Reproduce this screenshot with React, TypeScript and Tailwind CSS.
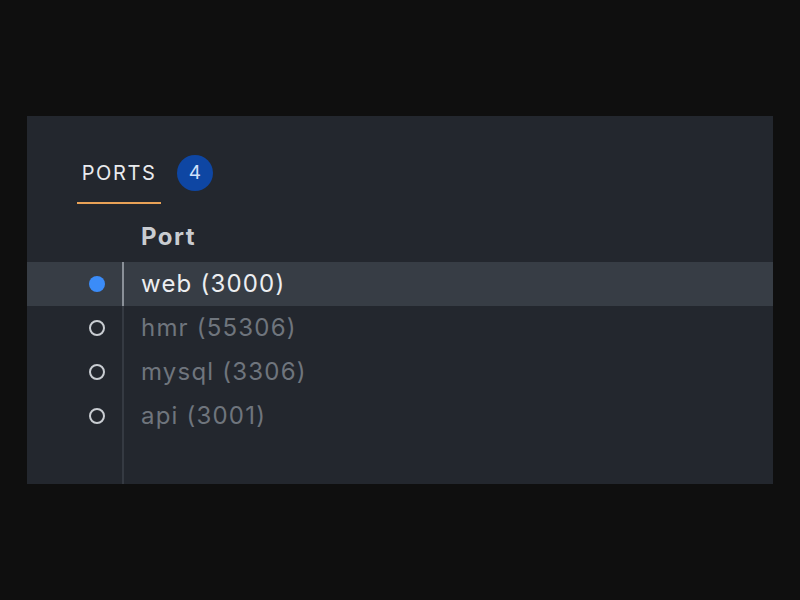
import React from "react";

type PortRow = {
  name: string;
  port: number;
  active?: boolean;
};

const rows: PortRow[] = [
  { name: "web", port: 3000, active: true },
  { name: "hmr", port: 55306 },
  { name: "mysql", port: 3306 },
  { name: "api", port: 3001 },
];

function PortRowItem({ row }: { row: PortRow }) {
  return (
    <div className={`flex h-[44px] ${row.active ? "bg-[#373d45]" : ""}`}>
      <div className="w-[95px] shrink-0 flex items-center justify-end pr-[17px]">
        {row.active ? (
          <span className="block w-[16px] h-[16px] rounded-full bg-[#3b8cf8]" />
        ) : (
          <span className="block w-[16px] h-[16px] rounded-full border-2 border-[#c9cdd2]" />
        )}
      </div>
      <div
        className={`w-[2px] shrink-0 ${
          row.active ? "bg-[#8a9098]" : "bg-[#353a42]"
        }`}
      />
      <div
        className={`flex items-center pl-[17px] text-[24px] tracking-[0.05em] ${
          row.active ? "text-[#eceef1]" : "text-[#6f757d]"
        }`}
      >
        {row.name} ({row.port})
      </div>
    </div>
  );
}

export default function App() {
  return (
    <div
      className="w-[800px] h-[600px] bg-[#0f0f0f] pt-[116px] px-[27px]"
      style={{ fontFamily: "Inter, 'Noto Sans', sans-serif" }}
    >
      <div className="w-[746px] h-[368px] bg-[#23272e] flex flex-col">
        {/* Tabs */}
        <div className="flex items-center pl-[50px] pt-[38px]">
          <div className="flex flex-col items-center">
            <span className="px-[3px] text-[20px] leading-[38px] tracking-[0.08em] text-[#e9ebee]">
              PORTS
            </span>
            <span className="mt-[10px] block h-[2px] w-[84px] bg-[#e9a257]" />
          </div>
          <span className="ml-[16px] mb-[12px] flex items-center justify-center w-[36px] h-[36px] rounded-full bg-[#0e46a3] text-[19px] text-[#cfe0fb]">
            4
          </span>
        </div>

        {/* Header */}
        <div className="flex h-[50px] mt-[8px] items-center">
          <div className="w-[97px] shrink-0" />
          <div className="pl-[17px] text-[24px] font-bold tracking-[0.06em] text-[#c9ccd1]">
            Port
          </div>
        </div>

        {/* Rows */}
        <div className="flex flex-col flex-1">
          {rows.map((r) => (
            <PortRowItem key={r.name} row={r} />
          ))}
          <div className="flex flex-1">
            <div className="w-[95px] shrink-0" />
            <div className="w-[2px] bg-[#353a42]" />
          </div>
        </div>
      </div>
    </div>
  );
}
